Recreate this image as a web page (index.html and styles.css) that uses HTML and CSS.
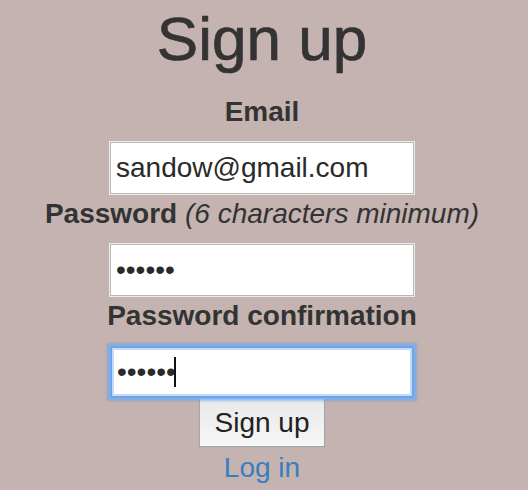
FILE: index.html
```html
<!DOCTYPE html>
<html>
<head>
<meta charset="utf-8">
<link rel="stylesheet" href="styles.css">
</head>
<body>
<div class="page">
  <h1 class="title">Sign up</h1>
  <form class="form">
    <label class="label">Email</label>
    <input class="field" type="email" value="sandow@gmail.com">
    <label class="label">Password <em class="hint">(6 characters minimum)</em></label>
    <input class="field" type="password" value="123456">
    <label class="label">Password confirmation</label>
    <div class="focus-wrap">
      <input class="field field-focus" type="password" value="123456">
      <span class="caret"></span>
    </div>
    <button class="btn" type="button">Sign up</button>
  </form>
  <a class="link" href="#">Log in</a>
</div>
</body>
</html>
```
FILE: styles.css
```css
html, body {
  margin: 0;
  padding: 0;
  background: #c4b3b0;
}
body {
  font-family: "Liberation Sans", Arial, sans-serif;
  color: #333333;
  font-size: 28px;
}
.page {
  display: flex;
  flex-direction: column;
  align-items: center;
  padding: 5px 4px 0 0;
}
.title {
  font-size: 62px;
  font-weight: 400;
  line-height: 68px;
  margin: 0 0 19px 0;
  -webkit-text-stroke: 0.7px #333333;
}
.form {
  display: flex;
  flex-direction: column;
  align-items: center;
}
.label {
  font-weight: bold;
  line-height: 40px;
  margin-bottom: 10px;
}
.hint {
  font-weight: normal;
}
.field {
  box-sizing: border-box;
  width: 304px;
  height: 52px;
  margin: 0;
  padding: 0 5px;
  font-family: "Liberation Sans", Arial, sans-serif;
  font-size: 28px;
  color: #2a2a2a;
  background: #ffffff;
  border: 1px solid #b9b9b9;
  box-shadow: 0 0 0 1px #ececec;
  outline: none;
}
.focus-wrap {
  position: relative;
}
.field-focus {
  border: 2px solid #6aa5ee;
  box-shadow: 0 0 0 1px #7fb3f1, 0 0 2px 3px rgba(96, 156, 234, 0.55), inset 0 0 0 2px #c4dcfa;
  padding-left: 5px;
}
.caret {
  position: absolute;
  left: 64px;
  top: 11px;
  width: 2px;
  height: 30px;
  background: #111111;
}
.btn {
  box-sizing: border-box;
  height: 49px;
  margin: 0;
  padding: 0 15px;
  font-family: "Liberation Sans", Arial, sans-serif;
  font-size: 28px;
  color: #222222;
  background: linear-gradient(#e9e9e9, #f6f6f6);
  border: 1px solid #a9a5a4;
  box-shadow: 0 0 0 1px #bcb3b1;
  border-radius: 0;
}
.link {
  margin-top: 5px;
  color: #3a7cc0;
  text-decoration: none;
  line-height: 32px;
}
```
